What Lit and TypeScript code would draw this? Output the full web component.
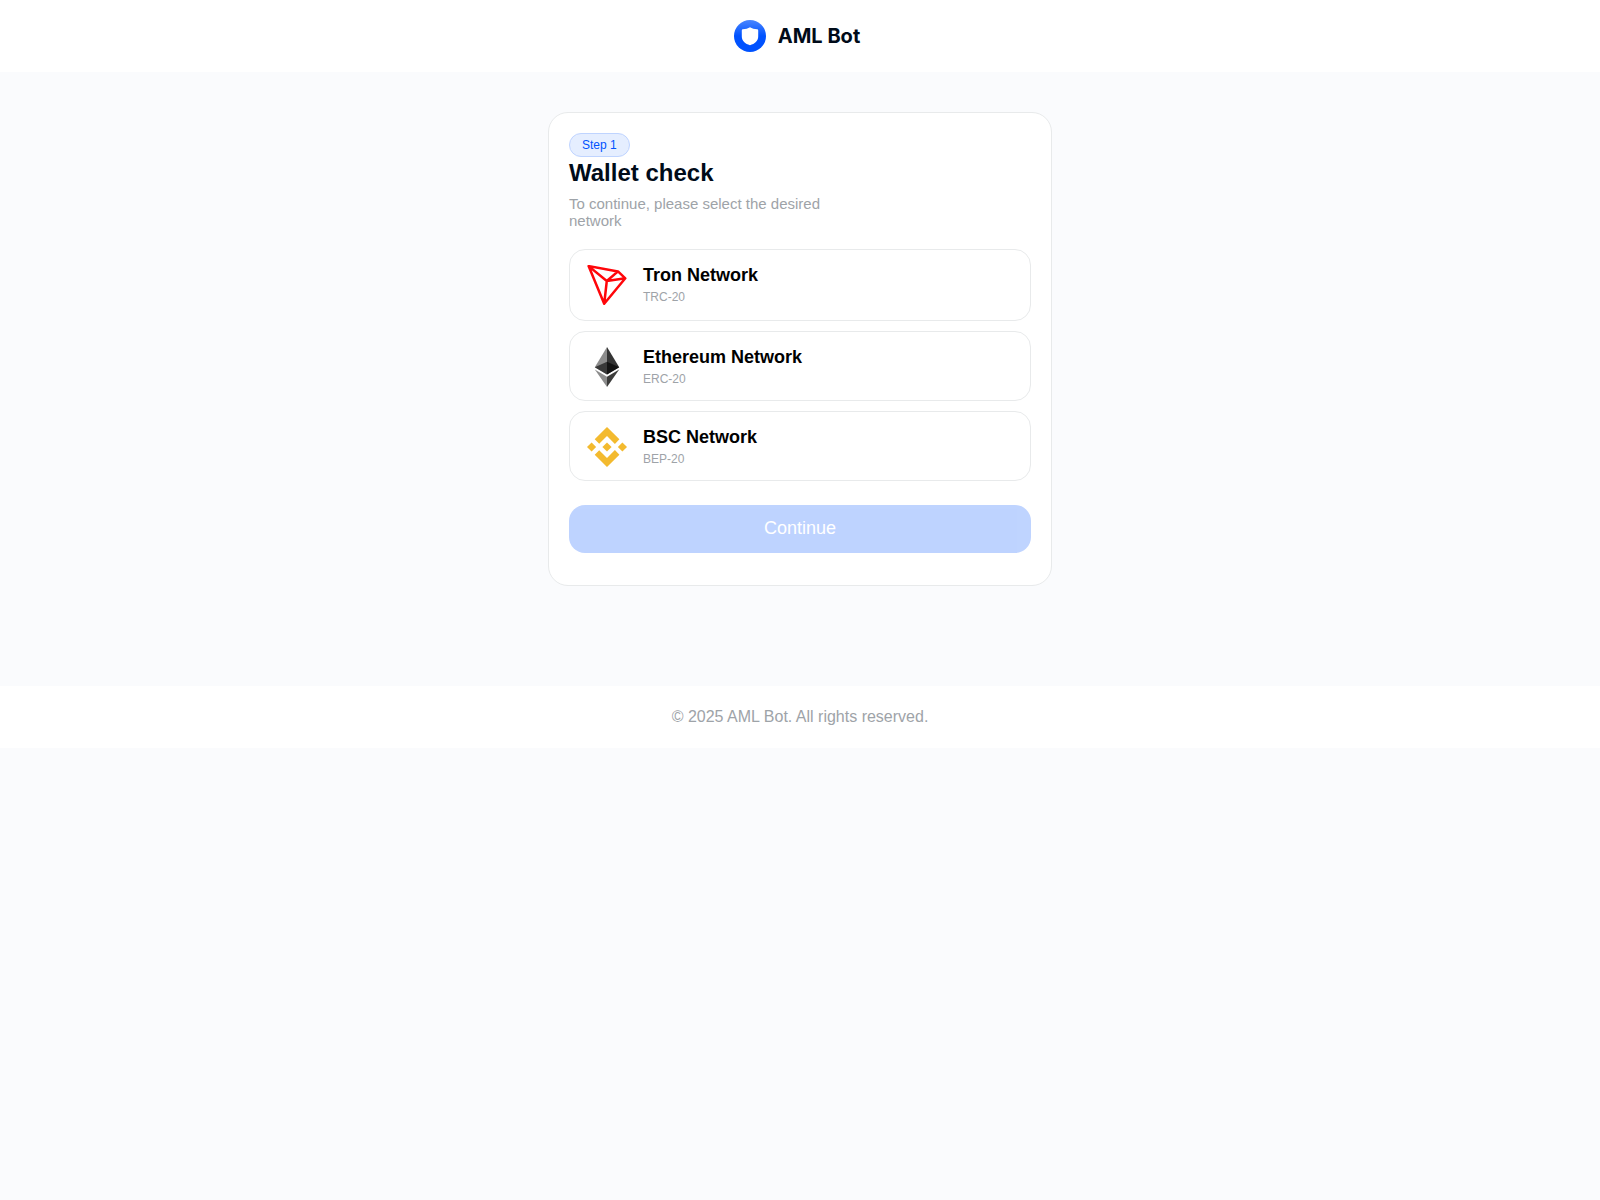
import { LitElement, html, css, svg } from "lit";
import type { TemplateResult } from "lit";
import { customElement, state } from "lit/decorators.js";
import { classMap } from "lit/directives/class-map.js";

interface Network {
  id: string;
  name: string;
  standard: string;
  icon: TemplateResult;
}

const tronIcon = svg`
  <path d="M1.6 1.1 31 6.4 38.3 13.3 17.2 38.8Z M17.2 38.8 19.8 16 M1.6 1.1 19.8 16 31 6.4 M19.8 16 38.3 13.3"
    fill="none" stroke="#ff060a" stroke-width="2.5" stroke-linejoin="round" />
`;

const ethereumIcon = svg`
  <path d="M20 0 32.2 20.3 20 27.5Z" fill="#343434" />
  <path d="M20 0 20 27.5 7.8 20.3Z" fill="#8c8c8c" />
  <path d="M20 14.8 32.2 20.3 20 27.5Z" fill="#141414" />
  <path d="M20 14.8 20 27.5 7.8 20.3Z" fill="#393939" />
  <path d="M20 29.8 32.2 22.6 20 39.9Z" fill="#3c3c3b" />
  <path d="M20 29.8 20 39.9 7.8 22.6Z" fill="#8c8c8c" />
`;

const bscIcon = svg`
  <g fill="#f3ba2f">
    <path d="M12.2 16.8 20 9l7.9 7.9 4.5-4.6L20 0 7.7 12.2Z" />
    <path d="M0 20l4.6-4.6L9.1 20l-4.5 4.6Z" />
    <path d="M12.2 23.2 20 31l7.9-7.9 4.5 4.6L20 40 7.7 27.8Z" />
    <path d="M30.9 20l4.5-4.6L40 20l-4.6 4.6Z" />
    <path d="M24.6 20 20 15.4 15.4 20 20 24.6Z" />
  </g>
`;

const networks: Network[] = [
  { id: "tron", name: "Tron Network", standard: "TRC-20", icon: tronIcon },
  { id: "eth", name: "Ethereum Network", standard: "ERC-20", icon: ethereumIcon },
  { id: "bsc", name: "BSC Network", standard: "BEP-20", icon: bscIcon },
];

@customElement("app-root")
export class AppRoot extends LitElement {
  @state() private selected = "";

  static styles = css`
    :host {
      display: block;
      min-height: 100vh;
      background: #fafbfd;
      color: #000b19;
      font-family: "Liberation Sans", Arial, sans-serif;
    }
    * {
      box-sizing: border-box;
    }
    .header {
      display: flex;
      justify-content: center;
      padding: 20px;
      background: #fff;
    }
    .brand {
      display: flex;
      align-items: center;
      gap: 12px;
      padding-right: 6px;
      color: inherit;
      text-decoration: none;
      font: 700 20px/32px Inter, sans-serif;
    }
    .logo {
      display: block;
      width: 32px;
      height: 32px;
    }
    .main {
      display: flex;
      justify-content: center;
      padding: 40px 20px 100px;
    }
    .card {
      width: 100%;
      max-width: 504px;
      padding: 20px 20px 32px;
      border: 1px solid #e8eaeb;
      border-radius: 20px;
      background: #fff;
    }
    .badge {
      display: block;
      width: fit-content;
      padding: 0 12px;
      border: 1px solid #bfd4ff;
      border-radius: 12px;
      background: #e5eeff;
      color: #0052ff;
      font-size: 12px;
      line-height: 22px;
    }
    .title {
      margin: 2px 0 8px;
      font-size: 24px;
      line-height: 28px;
    }
    .hint {
      max-width: 280px;
      margin: 0 0 20px;
      color: #9ea3a8;
      font-size: 15px;
      line-height: 17px;
    }
    .networks {
      display: flex;
      flex-direction: column;
      gap: 10px;
      margin-bottom: 24px;
    }
    .network {
      display: flex;
      align-items: center;
      gap: 16px;
      width: 100%;
      padding: 15px 17px 13px;
      border: 1px solid #e8eaeb;
      border-radius: 16px;
      background: #fff;
      color: #000;
      font-family: inherit;
      text-align: left;
      cursor: pointer;
    }
    .network:first-child {
      padding-bottom: 15px;
    }
    .network.active {
      border-color: #0052ff;
    }
    .icon {
      flex: none;
      width: 40px;
      height: 40px;
    }
    .label {
      display: flex;
      flex-direction: column;
      gap: 4px;
    }
    .name {
      font-size: 18px;
      font-weight: 700;
      line-height: 20px;
    }
    .standard {
      color: #9ea3a8;
      font-size: 12px;
      line-height: 16px;
    }
    .continue {
      display: block;
      width: 100%;
      padding: 12px 20px 14px;
      border: 0;
      border-radius: 16px;
      background: #0052ff;
      color: #fff;
      font-family: inherit;
      font-size: 18px;
      line-height: 22px;
      cursor: pointer;
    }
    .continue:disabled {
      opacity: 0.25;
      cursor: default;
    }
    .footer {
      padding: 22px 20px;
      background: #fff;
      color: #9ea3a8;
      font-size: 16px;
      line-height: 18px;
      text-align: center;
    }
  `;

  private renderNetwork(network: Network) {
    const active = this.selected === network.id;
    return html`
      <button
        type="button"
        class=${classMap({ network: true, active })}
        aria-pressed=${active ? "true" : "false"}
        @click=${() => (this.selected = network.id)}
      >
        <svg class="icon" viewBox="0 0 40 40" aria-hidden="true">${network.icon}</svg>
        <span class="label">
          <span class="name">${network.name}</span>
          <span class="standard">${network.standard}</span>
        </span>
      </button>
    `;
  }

  render() {
    return html`
      <header class="header">
        <a class="brand" href="#">
          <svg class="logo" viewBox="0 0 32 32" aria-hidden="true">
            <defs>
              <linearGradient id="disc" x1="0" y1="0" x2="0" y2="1">
                <stop offset="0" stop-color="#4a86ff" />
                <stop offset="0.5" stop-color="#0052ff" />
              </linearGradient>
            </defs>
            <circle cx="16" cy="16" r="16" fill="url(#disc)" />
            <path
              d="M16 7.2C18 8.4 20.4 9 23.2 9.3Q24.2 9.4 24.2 10.4V16.5C24.2 21 20.8 23.8 16 25.2C11.2 23.8 7.8 21 7.8 16.5V10.4Q7.8 9.4 8.8 9.3C11.6 9 14 8.4 16 7.2Z"
              fill="#fff"
            />
          </svg>
          <span>AML Bot</span>
        </a>
      </header>
      <main class="main">
        <section class="card">
          <span class="badge">Step 1</span>
          <h1 class="title">Wallet check</h1>
          <p class="hint">To continue, please select the desired network</p>
          <div class="networks">${networks.map((n) => this.renderNetwork(n))}</div>
          <button type="button" class="continue" ?disabled=${!this.selected}>Continue</button>
        </section>
      </main>
      <footer class="footer">© 2025 AML Bot. All rights reserved.</footer>
    `;
  }
}
